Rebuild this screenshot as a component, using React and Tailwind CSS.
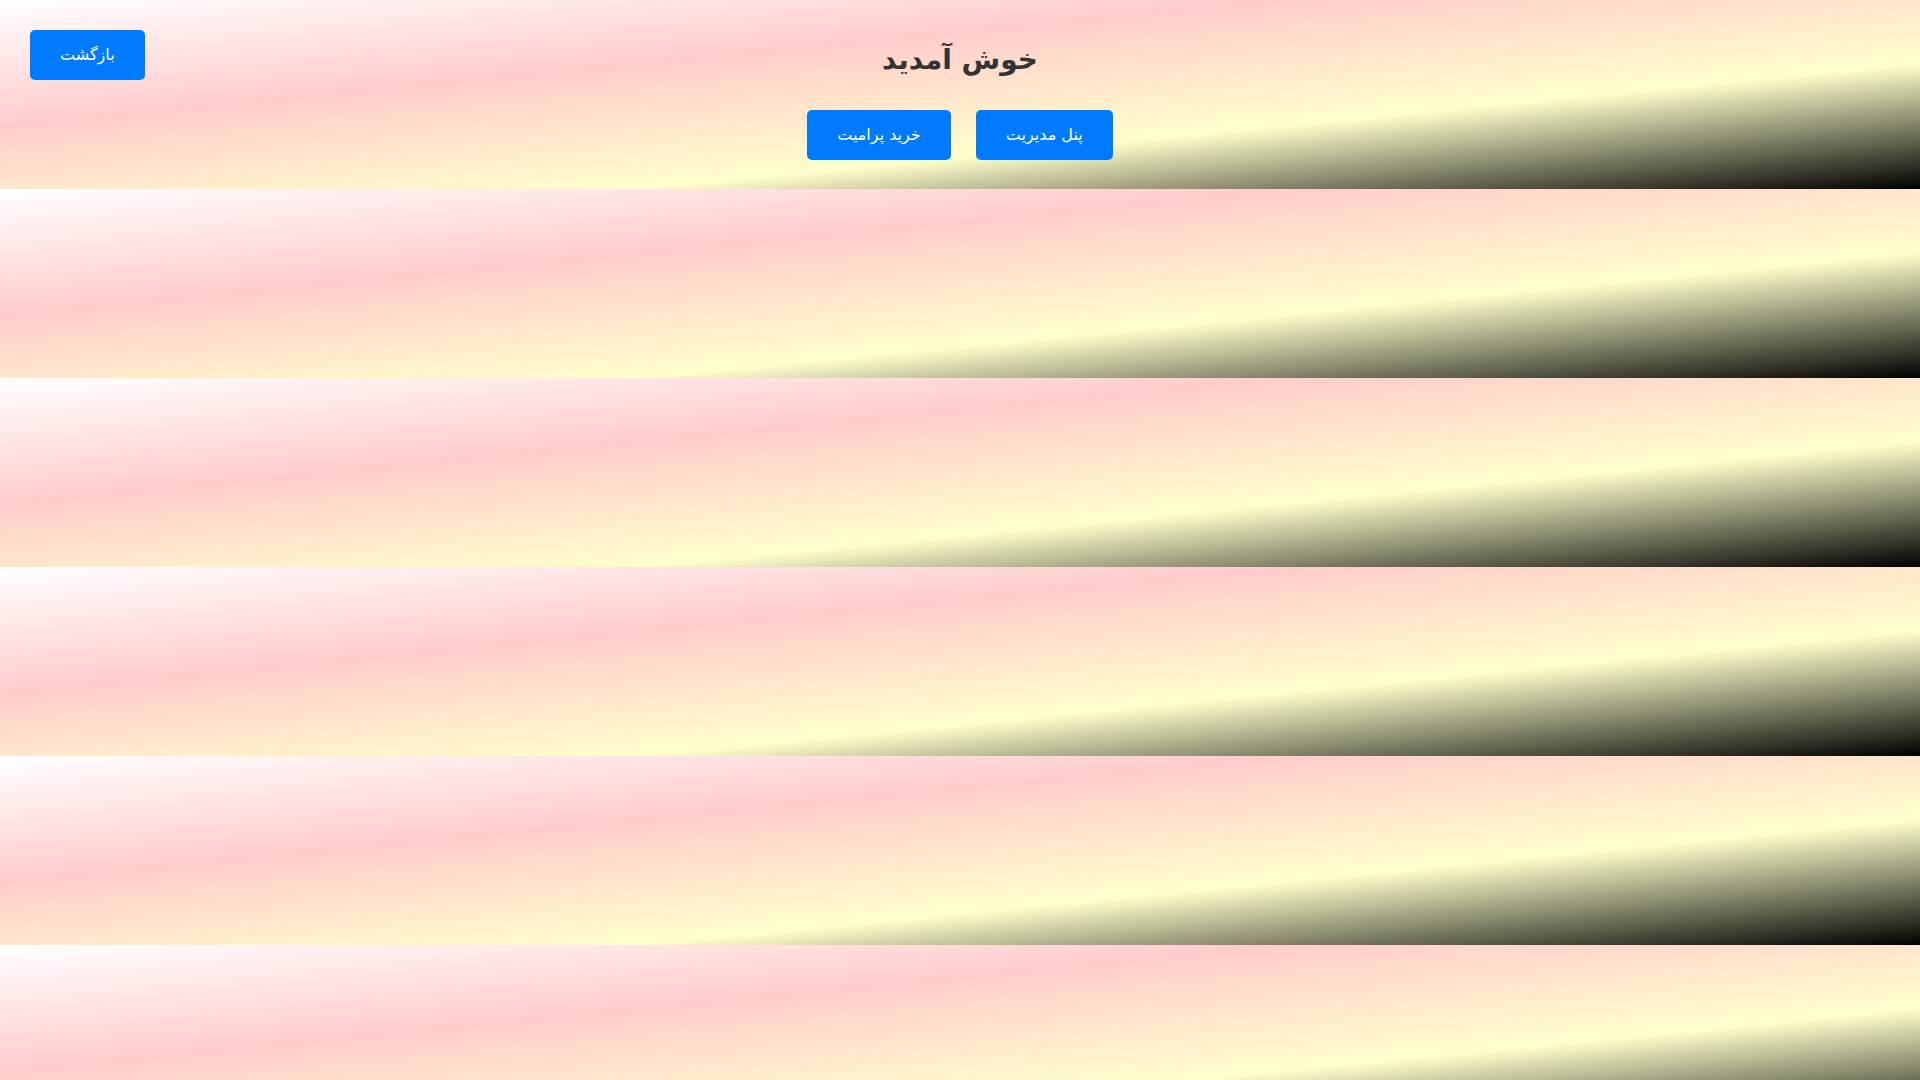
export default function App() {
  return (
    <div
      dir="rtl"
      className="relative min-h-screen bg-[linear-gradient(to_bottom_right,#ffffff,#ffcccc,#ffffcc,#000000)] bg-[length:100%_189px] bg-repeat font-['DejaVu_Sans',sans-serif]"
    >
      <div className="p-5 text-center">
        {/* back button sits over the header */}
        <button className="absolute top-[30px] left-[30px] px-[30px] py-[15px] rounded-[5px] bg-[#007bff] text-white text-base leading-5">
          بازگشت
        </button>
        <h1 className="my-[21.44px] text-[28px] leading-[37px] font-bold text-[#333]">خوش آمدید</h1>
        <div>
          <button className="inline-block m-[10px] px-[30px] py-[15px] rounded-[5px] bg-[#007bff] text-white text-base leading-5">
            پنل مدیریت
          </button>{' '}
          <button className="inline-block m-[10px] px-[30px] py-[15px] rounded-[5px] bg-[#007bff] text-white text-base leading-5">
            خرید پرامیت
          </button>
        </div>
      </div>
    </div>
  );
}
